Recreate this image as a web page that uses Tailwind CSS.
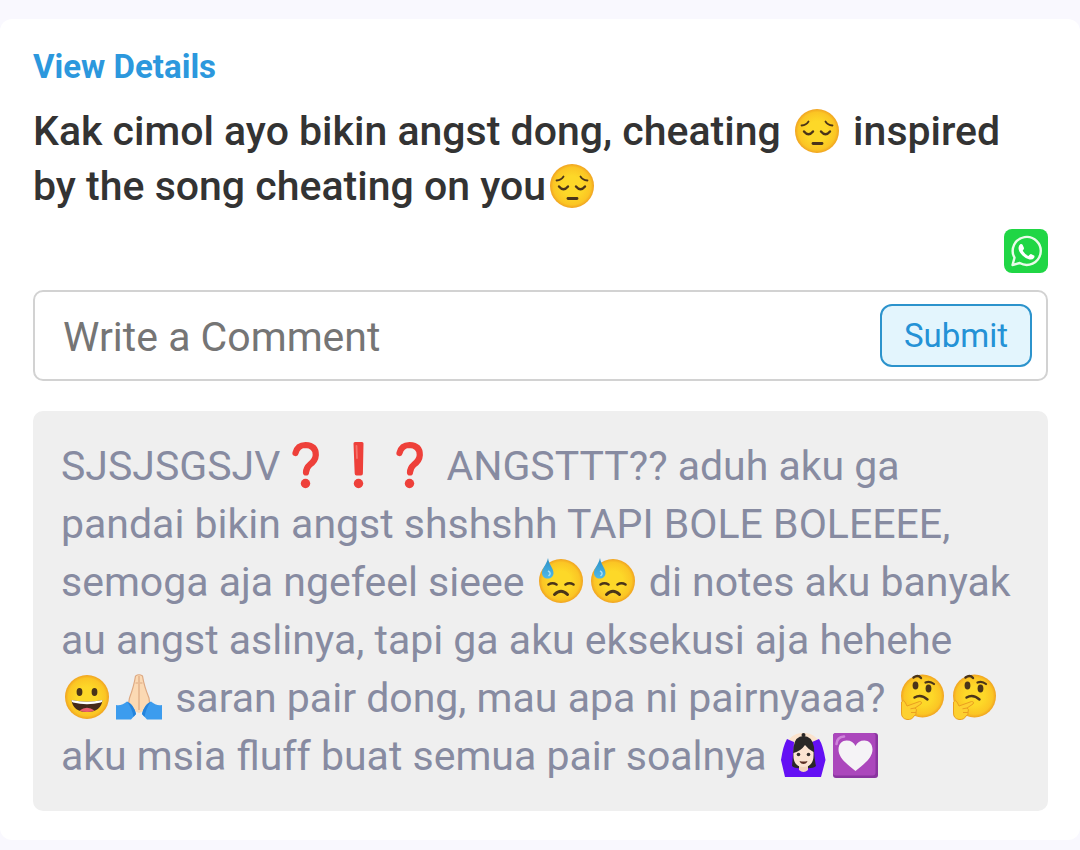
<!DOCTYPE html>
<html lang="id">

<head>
    <meta charset="UTF-8">
    <meta name="viewport" content="width=device-width, initial-scale=1.0">
    <title>View Details</title>
    <script src="https://cdn.jsdelivr.net/npm/@tailwindcss/browser@4"></script>
</head>

<body class="bg-[#f9f8fe] py-[19px] font-['Roboto',sans-serif]">

    <!-- Emoji shapes, reused below -->
    <svg class="absolute size-0" aria-hidden="true">
        <defs>
            <radialGradient id="skin" cx="50%" cy="50%" r="50%">
                <stop offset="0.45" stop-color="#fdd828" />
                <stop offset="0.85" stop-color="#fbc524" />
                <stop offset="1" stop-color="#f0a321" />
            </radialGradient>
            <linearGradient id="drop" x1="0" y1="0" x2="0" y2="1">
                <stop offset="0" stop-color="#2b8fc4" />
                <stop offset="1" stop-color="#4fb9ea" />
            </linearGradient>
            <symbol id="pensive" viewBox="0 0 44 44" overflow="visible">
                <circle cx="22" cy="22" r="22" fill="url(#skin)" />
                <g fill="none" stroke="#4a3419" stroke-linecap="round">
                    <path d="M6.500 16.500Q11.500 16 13.500 12.500M37.500 16.500Q32.500 16 30.500 12.500" stroke-width="1.800" />
                    <path d="M9 22.500Q13.500 28 18 22.500M26 22.500Q30.500 28 35 22.500" stroke-width="2.400" />
                    <path d="M18 34.500H27" stroke-width="2.800" />
                </g>
            </symbol>
            <symbol id="sweat" viewBox="0 0 44 44" overflow="visible">
                <circle cx="22" cy="22" r="22" fill="url(#skin)" />
                <path d="M9 -1C7.500 6 3 9 3 14C3 17.500 5.500 19.500 8.700 19.500C12 19.500 14.500 17.500 14.500 14C14.500 9 10 6 9 -1Z" fill="url(#drop)" />
                <path d="M9 12Q13 14 9.500 17" fill="none" stroke="#a4ddf5" stroke-width="1.500" />
                <g fill="none" stroke="#4a3419" stroke-linecap="round">
                    <path d="M9.500 25.500Q13.500 23 17.500 25.500M26.500 25.500Q30.500 23 34.500 25.500" stroke-width="2.600" />
                    <path d="M15.500 35.500Q22 29 28.500 35.500" stroke-width="3" />
                </g>
            </symbol>
            <symbol id="grin" viewBox="0 0 44 44" overflow="visible">
                <circle cx="22" cy="22" r="22" fill="url(#skin)" />
                <ellipse cx="14.500" cy="17" rx="2.900" ry="4" fill="#4a3419" />
                <ellipse cx="29.500" cy="17" rx="2.900" ry="4" fill="#4a3419" />
                <path d="M6.500 25Q22 28.500 37.500 25Q36 37 22 37Q8 37 6.500 25Z" fill="#43291b" />
                <path d="M6.500 25Q22 28.500 37.500 25Q37.500 27 36 27.500Q22 31 8 27.500Q6.500 27 6.500 25Z" fill="#fff" />
                <path d="M14.500 35.500Q22 30 29.500 35.500Q26 37 22 37Q18 37 14.500 35.500Z" fill="#ec5f6e" />
            </symbol>
            <symbol id="pray" viewBox="0 0 44 44" overflow="visible">
                <path d="M18.500 1Q22 -1.500 25.500 1Q27 11 32 23Q34 31 27 36L22 38L17 36Q10 31 12.500 23Q17 11 18.500 1Z" fill="#fbd9b3" />
                <path d="M18.500 1Q22 -1.500 25.500 1Q27 11 32 23Q34 31 27 36M17 36Q10 31 12.500 23Q17 11 18.500 1M22 1V35" fill="none" stroke="#dda982" stroke-width="1.200" />
                <path d="M18.500 8H21M23 8H25.500" stroke="#dda982" stroke-width="1" />
                <path d="M-1 30Q5 31 10 26.500Q17 30 19 39L14 44.500H-1ZM45 30Q39 31 34 26.500Q27 30 25 39L30 44.500H45Z" fill="#3c9cee" />
                <path d="M10 26.500Q17 30 19 39L16.500 42Q15 33 10 26.500ZM34 26.500Q27 30 25 39L27.500 42Q29 33 34 26.500Z" fill="#2584dc" />
            </symbol>
            <symbol id="think" viewBox="0 0 44 44" overflow="visible">
                <circle cx="22.500" cy="21" r="21.500" fill="url(#skin)" />
                <g fill="none" stroke="#4a3419" stroke-linecap="round">
                    <path d="M13.500 2.500Q18 -0.500 21 3" stroke-width="2.400" />
                    <path d="M25.500 7.500Q30 5.500 34 9" stroke-width="2.200" />
                    <path d="M14.500 22.500Q21 18.500 27.500 24.500" stroke-width="2.400" />
                </g>
                <ellipse cx="15.500" cy="10.500" rx="2.900" ry="4" fill="#4a3419" />
                <ellipse cx="28.500" cy="13.500" rx="2.900" ry="4" fill="#4a3419" />
                <path d="M1.500 27Q3 24 5 27L7 31L19.500 26.500Q22.500 26.500 21 29L15 33Q17.500 34.500 16 37Q17 40 14 41Q12 45 7 44.500Q1 43.500 1.500 37Z" fill="#fdd030" stroke="#ea9f20" stroke-width="1" stroke-linejoin="round" />
                <path d="M10.500 33.800L15 33M11 37.500H16" stroke="#ea9f20" stroke-width="1" />
            </symbol>
            <symbol id="ok" viewBox="0 0 44 44" overflow="visible">
                <path d="M6 10Q10 1 20 0H25Q34 1 39 10L33 13H10Z" fill="#fbe3cd" />
                <path d="M6 6L13 9L12 33H34L31 9L38 6Q42 12 44.500 27L40 44H4L0 27Q2 13 6 6Z" fill="#6410f4" />
                <path d="M11 33Q12 22 12.500 14Q14 3 22.500 3Q31 3 33 14Q33 25 35 33Q32 36 22.500 35Q14 36 11 33Z" fill="#2a2828" />
                <circle cx="22.500" cy="2" r="2" fill="#2a2828" />
                <path d="M18 31H27V37Q22.500 41 18 37Z" fill="#f3d3bd" />
                <path d="M12.500 20Q20 18 24 12Q27 16 32.500 19Q33.500 34 22.500 34Q11.500 34 12.500 20Z" fill="#fbe3d1" />
                <circle cx="17.500" cy="21.500" r="1.800" fill="#35302e" />
                <circle cx="27.500" cy="21.500" r="1.800" fill="#35302e" />
                <path d="M18.500 28Q22.500 29 26.500 28Q25.500 31 22.500 31Q19.500 31 18.500 28Z" fill="#5c2e22" />
            </symbol>
            <symbol id="heart" viewBox="0 0 44 44" overflow="visible">
                <rect width="45" height="45" rx="3" fill="#8a35a0" />
                <rect width="42.500" height="42.500" rx="3" fill="#ab47bc" />
                <path d="M3.500 11Q4 4 11 3.500" fill="none" stroke="#ce85da" stroke-width="2.600" stroke-linecap="round" />
                <path d="M22.500 38C14 31 5.500 25 5.500 16.500C5.500 10.500 9.500 7.500 13.500 7.500C18 7.500 21 9.500 22.500 13C24 9.500 27 7.500 31.500 7.500C35.500 7.500 39.500 10.500 39.500 16.500C39.500 25 31 31 22.500 38Z" fill="#f5f3f6" />
            </symbol>
            <symbol id="question" viewBox="0 0 44 44" overflow="visible">
                <path d="M11.500 10Q13.500 2 21.500 2Q32 2.500 31.800 12Q31.500 17.500 26 21.500Q22 25 22 29.500" fill="none" stroke="#ee403a" stroke-width="6.200" stroke-linecap="round" />
                <circle cx="21.500" cy="40.500" r="4.700" fill="#ee403a" />
            </symbol>
            <symbol id="exclaim" viewBox="0 0 44 44" overflow="visible">
                <path d="M19 -1H26Q27.500 -1 27.500 0.500L26.900 30.500Q26.900 32.500 25 32.500H20.500Q18.800 32.500 18.700 30.500L17.500 0.500Q17.500 -1 19 -1Z" fill="#ee403a" />
                <path d="M20.500 3L21 15" stroke="#f5726a" stroke-width="1.800" stroke-linecap="round" />
                <circle cx="22.500" cy="40.500" r="4.700" fill="#ee403a" />
            </symbol>
        </defs>
    </svg>

    <main class="rounded-xl bg-white pt-7 pr-8 pb-[29px] pl-[33px]">
        <a href="#" class="block text-[33px] leading-10 font-bold text-[#2c98dd]">View Details</a>

        <h1 class="mt-[17px] text-[41px] leading-[55px] font-medium text-[#333333]">
            Kak cimol ayo bikin angst dong, cheating <svg class="mx-1 inline-block size-11 overflow-visible align-[-8px]" role="img" aria-label="pensive"><use href="#pensive" /></svg> inspired<br>
            by the song cheating on you<svg class="mx-1 inline-block size-11 overflow-visible align-[-8px]" role="img" aria-label="pensive"><use href="#pensive" /></svg>
        </h1>

        <div class="mt-[15px] flex justify-end">
            <a href="#" aria-label="WhatsApp">
                <svg class="size-11" viewBox="0 0 44 44">
                    <rect width="44" height="44" rx="8" fill="#20d645" />
                    <path d="M8.500 36L10.500 28.700A14 14 0 1 1 15.700 34Z" fill="none" stroke="#e9fbe9" stroke-width="2.400" stroke-linejoin="round" />
                    <path d="M16.500 15Q18 14.500 18.700 16L20 19Q20.300 20 18.700 21.700Q21 25.500 24.500 27Q26.300 24.700 27 25L30 26.500Q31 27 30 29Q28.500 31 25.500 30.500Q22 30 18.500 26.500Q14.500 22.500 14.500 19Q14.500 16.500 16.500 15Z" fill="#fff" />
                </svg>
            </a>
        </div>

        <form class="mt-[17px] flex items-center rounded-[10px] border-2 border-[#d2d2d2] py-3 pr-[14px] pl-7">
            <input type="text" aria-label="Write a Comment" placeholder="Write a Comment" class="min-w-0 flex-1 pt-1 text-[41px] leading-[59px] outline-none placeholder:text-[#757575]">
            <button type="button" class="h-[63px] w-38 rounded-xl border-2 border-[#2c93cc] bg-[#e3f5fd] text-[33px] leading-10 text-[#2492d6]">Submit</button>
        </form>

        <p class="mt-[30px] rounded-[10px] bg-[#efefef] px-7 py-[26px] text-[41px] leading-[58px] text-[#878ba1]">
            SJSJSGSJV<svg class="mx-1 inline-block size-11 overflow-visible align-[-7px]" role="img" aria-label="question"><use href="#question" /></svg><svg class="mx-1 inline-block size-11 overflow-visible align-[-7px]" role="img" aria-label="exclamation"><use href="#exclaim" /></svg><svg class="mx-1 inline-block size-11 overflow-visible align-[-7px]" role="img" aria-label="question"><use href="#question" /></svg> ANGSTTT?? aduh aku ga<br>
            pandai bikin angst shshshh TAPI BOLE BOLEEEE,<br>
            semoga aja ngefeel sieee <svg class="mx-1 inline-block size-11 overflow-visible align-[-7px]" role="img" aria-label="sweat"><use href="#sweat" /></svg><svg class="mx-1 inline-block size-11 overflow-visible align-[-7px]" role="img" aria-label="sweat"><use href="#sweat" /></svg> di notes aku banyak<br>
            au angst aslinya, tapi ga aku eksekusi aja hehehe<br>
            <svg class="mx-1 inline-block size-11 overflow-visible align-[-7px]" role="img" aria-label="grin"><use href="#grin" /></svg><svg class="mx-1 inline-block size-11 overflow-visible align-[-7px]" role="img" aria-label="folded hands"><use href="#pray" /></svg> saran pair dong, mau apa ni pairnyaaa? <svg class="mx-1 inline-block size-11 overflow-visible align-[-7px]" role="img" aria-label="thinking"><use href="#think" /></svg><svg class="mx-1 inline-block size-11 overflow-visible align-[-7px]" role="img" aria-label="thinking"><use href="#think" /></svg><br>
            aku msia fluff buat semua pair soalnya <svg class="mx-1 inline-block size-11 overflow-visible align-[-7px]" role="img" aria-label="ok"><use href="#ok" /></svg><svg class="mx-1 inline-block size-11 overflow-visible align-[-7px]" role="img" aria-label="heart"><use href="#heart" /></svg>
        </p>
    </main>

</body>

</html>
